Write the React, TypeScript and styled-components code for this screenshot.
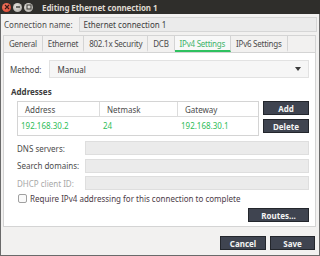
import styled, { createGlobalStyle } from 'styled-components';

const GlobalStyle = createGlobalStyle`
  html, body {
    margin: 0;
    padding: 0;
    background: #3a3a3a;
  }
  body {
    font-family: 'Noto Sans', 'DejaVu Sans', sans-serif;
    font-size: 8px;
    color: #4c4c4c;
    white-space: nowrap;
  }
`;

const tabs = ['General', 'Ethernet', '802.1x Security', 'DCB', 'IPv4 Settings', 'IPv6 Settings'];

const fields = [
  { label: 'DNS servers:', disabled: false },
  { label: 'Search domains:', disabled: false },
  { label: 'DHCP client ID:', disabled: true },
];

const App = () => {
  return (
    <>
      <GlobalStyle />
      <Window>
        <TitleBar>
          <WinButtons>
            <CloseDot>
              <svg width="6" height="6" viewBox="0 0 6 6">
                <path d="M1 1L5 5M5 1L1 5" stroke="#3a1a18" strokeWidth="1.2" />
              </svg>
            </CloseDot>
            <GrayDot>
              <svg width="6" height="6" viewBox="0 0 6 6">
                <path d="M1 3H5" stroke="#3c3b37" strokeWidth="1.4" />
              </svg>
            </GrayDot>
            <GrayDot>
              <svg width="6" height="6" viewBox="0 0 6 6">
                <rect x="1" y="1" width="4" height="4" fill="none" stroke="#3c3b37" strokeWidth="1" />
              </svg>
            </GrayDot>
          </WinButtons>
          <Title>Editing Ethernet connection 1</Title>
        </TitleBar>
        <Body>
          <NameRow>
            <Label>Connection name:</Label>
            <NameEntry>Ethernet connection 1</NameEntry>
          </NameRow>
          <Notebook>
            <TabBar>
              {tabs.map((t) => (
                <Tab key={t} $active={t === 'IPv4 Settings'}>
                  {t}
                </Tab>
              ))}
              <TabFill />
            </TabBar>
            <Page>
              <MethodRow>
                <Label>Method:</Label>
                <Combo>
                  <span>Manual</span>
                  <svg width="6" height="4" viewBox="0 0 6 4">
                    <path d="M0 0H6L3 4Z" fill="#3c3c3c" />
                  </svg>
                </Combo>
              </MethodRow>
              <SectionTitle>Addresses</SectionTitle>
              <AddressArea>
                <Table>
                  <HeadRow>
                    <HeadCell>Address</HeadCell>
                    <HeadCell>Netmask</HeadCell>
                    <HeadCell $last>Gateway</HeadCell>
                  </HeadRow>
                  <DataRow>
                    <DataCell>192.168.30.2</DataCell>
                    <DataCell>24</DataCell>
                    <DataCell>192.168.30.1</DataCell>
                  </DataRow>
                </Table>
                <SideButtons>
                  <DarkButton $w={46}>Add</DarkButton>
                  <DarkButton $w={46}>Delete</DarkButton>
                </SideButtons>
              </AddressArea>
              <FormGrid>
                {fields.map((f) => (
                  <FieldRow key={f.label}>
                    <FieldLabel $disabled={f.disabled}>{f.label}</FieldLabel>
                    <Entry />
                  </FieldRow>
                ))}
              </FormGrid>
              <CheckRow>
                <CheckBox />
                <span>Require IPv4 addressing for this connection to complete</span>
              </CheckRow>
              <RoutesRow>
                <DarkButton $w={61}>Routes…</DarkButton>
              </RoutesRow>
            </Page>
          </Notebook>
          <Footer>
            <DarkButton $w={46}>Cancel</DarkButton>
            <DarkButton $w={45}>Save</DarkButton>
          </Footer>
        </Body>
      </Window>
    </>
  );
};

const Window = styled.div`
  display: flex;
  width: 320px;
  height: 256px;
  flex-direction: column;
  overflow: hidden;
`;

const TitleBar = styled.div`
  display: flex;
  height: 14px;
  padding-left: 2px;
  align-items: center;
  gap: 9px;

  background: #2f2e2b;
`;

const WinButtons = styled.div`
  display: flex;
  align-items: center;
  gap: 2px;
`;

const Dot = styled.div`
  display: flex;
  width: 9px;
  height: 9px;
  align-items: center;
  justify-content: center;

  border-radius: 50%;
`;

const CloseDot = styled(Dot)`
  background: radial-gradient(circle at 40% 35%, #f37a62, #d9402c);
`;

const GrayDot = styled(Dot)`
  background: radial-gradient(circle at 40% 35%, #e4e2dd, #a8a6a0);
`;

const Title = styled.div`
  font-weight: bold;
  font-size: 8px;
  letter-spacing: -0.1px;
  color: #dfdbd2;
`;

const Body = styled.div`
  display: flex;
  flex: 1;
  padding: 0 2px 0 2px;
  flex-direction: column;

  background: #f2f1f0;
  border-left: 1px solid #6a6a6a;
  border-right: 1px solid #6a6a6a;
  border-bottom: 1px solid #6a6a6a;
`;

const Label = styled.span`
  color: #4c4c4c;
`;

const NameRow = styled.div`
  display: flex;
  height: 15px;
  margin-top: 3px;
  padding-left: 1px;
  align-items: center;
  gap: 6px;
`;

const NameEntry = styled.div`
  display: flex;
  flex: 1;
  height: 15px;
  padding-left: 4px;
  align-items: center;
  box-sizing: border-box;

  background: #ebebeb;
  border: 1px solid #d6d6d6;
  color: #3c3c3c;
`;

const Notebook = styled.div`
  display: flex;
  margin: 3px 1px 0 0;
  flex-direction: column;
`;

const TabBar = styled.div`
  display: flex;
  height: 17px;
  box-sizing: border-box;

  border: 1px solid #d4d4d4;
  border-bottom: none;
  background: #f2f1f0;
`;

const Tab = styled.div<{ $active?: boolean }>`
  display: flex;
  padding: 0 5px;
  align-items: center;
  box-sizing: border-box;

  border-right: 1px solid #d4d4d4;
  border-bottom: 2px solid ${({ $active }) => ($active ? '#2fc160' : 'transparent')};
  color: ${({ $active }) => ($active ? '#3eb46a' : '#4c4c4c')};
  background: ${({ $active }) => ($active ? '#f8f8f8' : 'transparent')};
  letter-spacing: -0.25px;
`;

const TabFill = styled.div`
  flex: 1;
`;

const Page = styled.div`
  display: flex;
  height: 175px;
  padding: 7px 6px 0 6px;
  flex-direction: column;
  box-sizing: border-box;

  background: #ffffff;
  border: 1px solid #d4d4d4;
`;

const MethodRow = styled.div`
  display: flex;
  height: 18px;
  align-items: center;
  gap: 7px;
`;

const Combo = styled.div`
  display: flex;
  flex: 1;
  height: 18px;
  padding: 0 7px 0 8px;
  align-items: center;
  justify-content: space-between;
  box-sizing: border-box;

  background: #f6f6f6;
  border: 1px solid #e2e2e2;
  color: #3c3c3c;
`;

const SectionTitle = styled.div`
  margin: 8px 0 4px 1px;

  font-weight: bold;
  color: #3c3c3c;
`;

const AddressArea = styled.div`
  display: flex;
  padding-left: 7px;
  gap: 4px;
`;

const Table = styled.div`
  display: flex;
  width: 243px;
  height: 35px;
  flex-direction: column;
  box-sizing: border-box;

  border: 1px solid #d4d4d4;
`;

const HeadRow = styled.div`
  display: grid;
  height: 15px;
  grid-template-columns: 82px 78px 1fr;
  box-sizing: border-box;

  border-bottom: 1px solid #dcdcdc;
`;

const HeadCell = styled.div<{ $last?: boolean }>`
  display: flex;
  padding-left: 7px;
  align-items: center;

  border-right: ${({ $last }) => ($last ? 'none' : '1px solid #dcdcdc')};
  color: #4c4c4c;
`;

const DataRow = styled.div`
  display: grid;
  height: 16px;
  grid-template-columns: 82px 78px 1fr;
`;

const DataCell = styled.div`
  display: flex;
  padding-left: 3px;
  align-items: center;

  color: #2ebd58;
`;

const SideButtons = styled.div`
  display: flex;
  flex-direction: column;
  gap: 4px;
`;

const DarkButton = styled.div<{ $w: number }>`
  display: flex;
  width: ${({ $w }) => $w}px;
  height: 14px;
  align-items: center;
  justify-content: center;
  box-sizing: border-box;

  background: #3f4450;
  border: 1px solid #23262c;
  color: #f4f4f4;
  font-weight: bold;
`;

const FormGrid = styled.div`
  display: flex;
  margin-top: 5px;
  padding-left: 7px;
  flex-direction: column;
  gap: 3.5px;
`;

const FieldRow = styled.div`
  display: flex;
  height: 14px;
  align-items: center;
`;

const FieldLabel = styled.span<{ $disabled?: boolean }>`
  width: 68px;

  color: ${({ $disabled }) => ($disabled ? '#a8a8a8' : '#4c4c4c')};
`;

const Entry = styled.div`
  flex: 1;
  height: 14px;
  box-sizing: border-box;

  background: #ebebeb;
  border: 1px solid #dedede;
`;

const CheckRow = styled.div`
  display: flex;
  height: 9px;
  margin-top: 4px;
  padding-left: 8px;
  align-items: center;
  gap: 3px;

  color: #4c3c48;
`;

const CheckBox = styled.div`
  width: 9px;
  height: 9px;
  box-sizing: border-box;

  background: #fafafa;
  border: 1px solid #a0a0a0;
  border-radius: 2px;
`;

const RoutesRow = styled.div`
  display: flex;
  margin-top: 5px;
  justify-content: flex-end;
`;

const Footer = styled.div`
  display: flex;
  margin-top: 9px;
  padding-right: 2px;
  justify-content: flex-end;
  gap: 4px;
`;

export default App;
